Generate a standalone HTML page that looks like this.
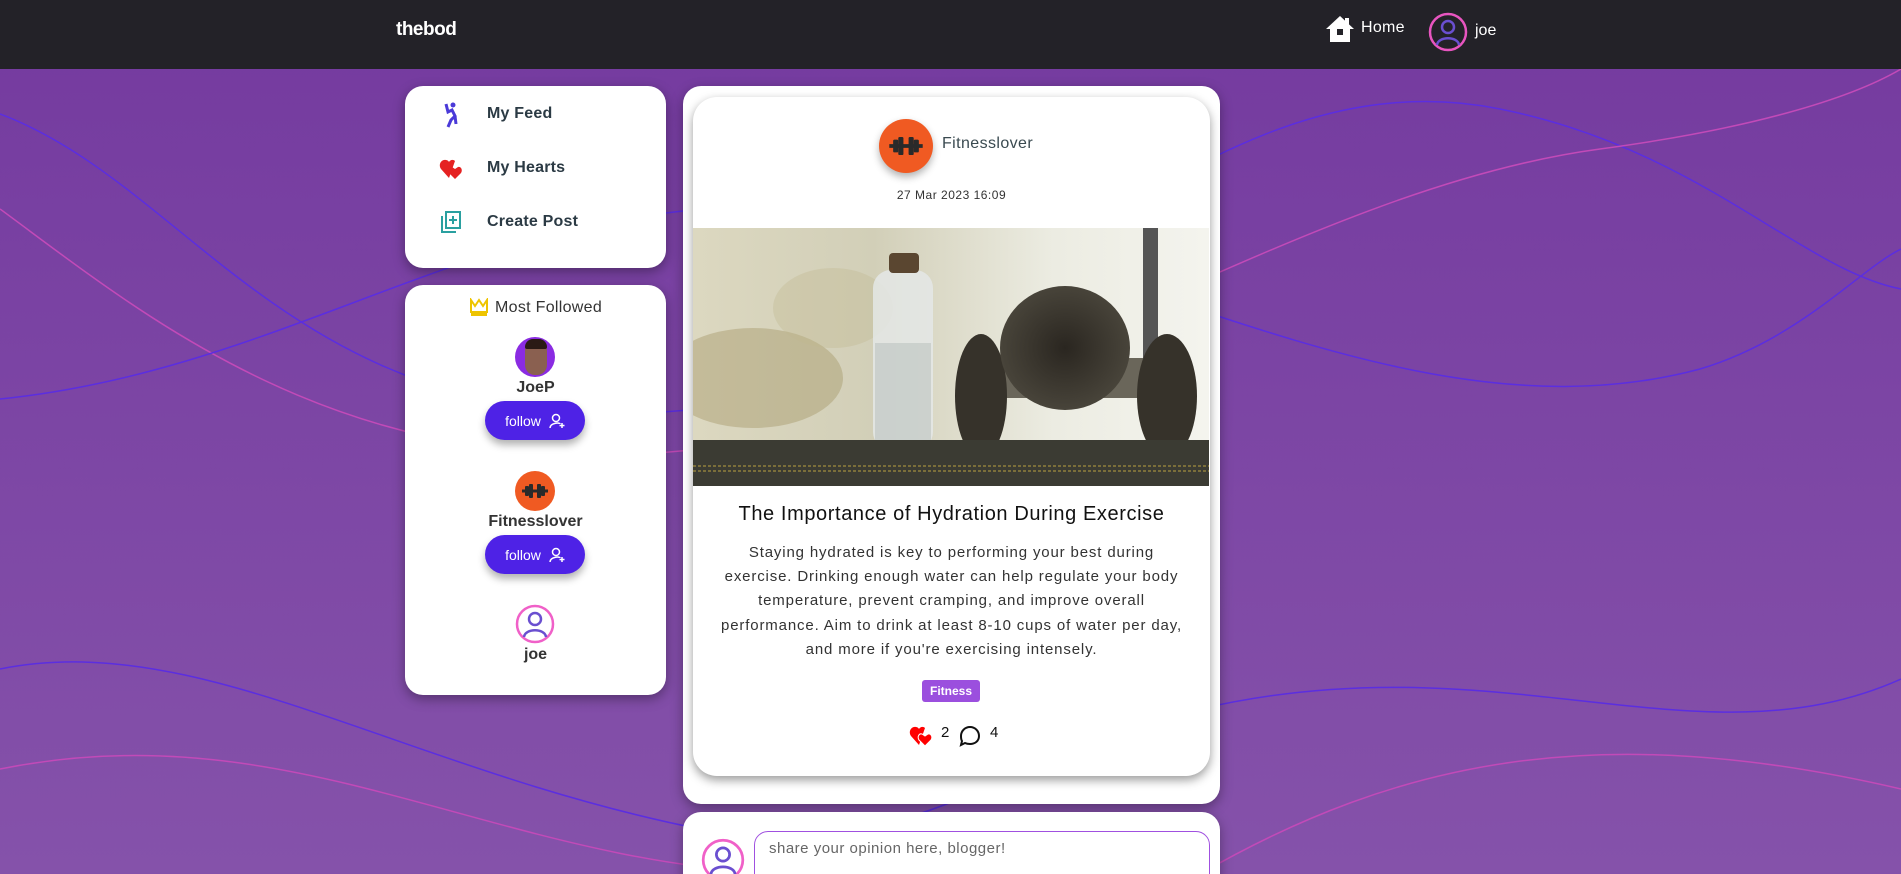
<!DOCTYPE html>
<html style="width:1901px;height:874px;overflow:hidden"><head><meta charset="utf-8"><style>
*{box-sizing:border-box;margin:0;padding:0}
body{width:1901px;height:874px;overflow:hidden;font-family:"Liberation Sans",sans-serif;background:linear-gradient(#743a9f,#8552aa);position:relative}
.nav{position:absolute;left:0;top:0;width:1901px;height:69px;background:#232228}
.abs{position:absolute}
.card{position:absolute;background:#fff;border-radius:18px;box-shadow:0 4px 12px rgba(0,0,0,.35)}
.item{position:absolute;left:0;font-size:16px;font-weight:bold;color:#2b3a44;letter-spacing:0.2px}
.btn{position:absolute;left:80px;width:100px;height:39px;border-radius:20px;background:#4e22e6;color:#fff;font-size:14px;box-shadow:0 5px 8px rgba(0,0,0,.3);display:flex;align-items:center;justify-content:center;gap:8px}
.nm{position:absolute;width:261px;left:0;text-align:center;font-size:16px;font-weight:bold;color:#333}
.av{position:absolute;border-radius:50%}
.ln{display:block;white-space:nowrap}
</style></head><body>
<svg class="abs" style="left:0;top:69px" width="1901" height="805" viewBox="0 0 1901 805" fill="none">
<path d="M0 45 C200 120 300 380 700 340 C1000 300 1200 -20 1500 40 C1700 80 1800 200 1901 220" stroke="#5b2ee0" stroke-width="1.5"/>
<path d="M0 140 C150 250 350 420 700 380 C1000 350 1300 120 1600 80 C1750 60 1850 30 1901 0" stroke="#c24ab8" stroke-width="1.5"/>
<path d="M0 330 C300 300 500 120 800 140 C1100 160 1400 380 1700 300 C1800 270 1860 200 1901 180" stroke="#5b2ee0" stroke-width="1.5"/>
<path d="M0 600 C200 560 400 700 700 760 C900 800 1000 690 1200 640 C1500 570 1700 700 1901 610" stroke="#5b2ee0" stroke-width="1.5"/>
<path d="M0 700 C300 640 500 800 800 805" stroke="#c24ab8" stroke-width="1.5"/>
<path d="M1200 805 C1400 690 1600 650 1901 720" stroke="#c24ab8" stroke-width="1.5"/>
</svg>
<div class="nav">
<div class="abs" style="left:396px;top:19px;color:#fff;font-size:19px;font-weight:bold;letter-spacing:-0.5px">thebod</div>
<svg class="abs" style="left:1325px;top:15px" width="30" height="28" viewBox="0 0 30 28"><path d="M15 1 L29 14 L25 14 L25 27 L5 27 L5 14 L1 14 Z" fill="#fff"/><rect x="20" y="3" width="4" height="7" fill="#fff"/><rect x="12" y="14" width="6" height="6" fill="#232228"/></svg>
<div class="abs" style="left:1361px;top:19px;color:#fff;font-size:16px;letter-spacing:0.3px">Home</div>
<svg class="abs" style="left:1428px;top:12px" width="40" height="40" viewBox="0 0 40 40"><circle cx="20" cy="20" r="18" fill="#232228" stroke="#e855c0" stroke-width="2.5"/><circle cx="20" cy="15" r="6" fill="none" stroke="#6a4fd0" stroke-width="2.5"/><path d="M9 33 C10 24 30 24 31 33" fill="none" stroke="#6a4fd0" stroke-width="2.5"/></svg>
<div class="abs" style="left:1475px;top:22px;color:#fff;font-size:16px">joe</div>
</div>

<div class="card" style="left:405px;top:86px;width:261px;height:182px">
<svg class="abs" style="left:38px;top:16px" width="16" height="26" viewBox="0 0 16 26"><circle cx="10" cy="3" r="2.5" fill="#4a3ad8"/><path d="M3 2 L5 10 L9 8 L12 14 L8 18 L5 25 M12 14 L13 22" stroke="#4a3ad8" stroke-width="3" fill="none"/></svg>
<div class="item" style="left:82px;top:19px">My Feed</div>
<svg class="abs" style="left:34px;top:72px" width="24" height="22" viewBox="0 0 24 22"><path d="M10 20 L2 11 C-1 7 2 1 7 2 C9 2 10 4 10 4 C11 2 14 1 16 3" fill="#e52222"/><path d="M16 21 L10 15 C8 12 10 8 13 9 L16 11 L19 9 C22 8 24 12 22 15 Z" fill="#e52222"/></svg>
<div class="item" style="left:82px;top:73px">My Hearts</div>
<svg class="abs" style="left:35px;top:124px" width="22" height="24" viewBox="0 0 22 24"><rect x="6" y="2" width="14" height="16" fill="none" stroke="#2aa0a0" stroke-width="2"/><path d="M2 6 L2 22 L16 22" fill="none" stroke="#2aa0a0" stroke-width="2"/><path d="M13 6 V14 M9 10 H17" stroke="#2aa0a0" stroke-width="2"/></svg>
<div class="item" style="left:82px;top:127px">Create Post</div>
</div>

<div class="card" style="left:405px;top:285px;width:261px;height:410px">
<svg class="abs" style="left:64px;top:13px" width="20" height="19" viewBox="0 0 20 19"><path d="M2 2 L6 8 L10 2 L14 8 L18 2 L18 14 L2 14 Z" fill="none" stroke="#eec400" stroke-width="2"/><rect x="2" y="15" width="16" height="3" fill="#eec400"/></svg>
<div class="abs" style="left:90px;top:14px;font-size:16px;color:#333;letter-spacing:0.3px">Most Followed</div>
<div class="av" style="left:110px;top:52px;width:40px;height:40px;background:#8a2be2;overflow:hidden"><div style="position:absolute;left:10px;top:4px;width:22px;height:34px;border-radius:10px;background:#8a6050"></div><div style="position:absolute;left:10px;top:2px;width:22px;height:10px;border-radius:8px 8px 2px 2px;background:#2a1a15"></div></div>
<div class="nm" style="top:94px">JoeP</div>
<div class="btn" style="top:116px">follow <svg width="16" height="16" viewBox="0 0 16 16" fill="none" stroke="#fff" stroke-width="1.5"><circle cx="7" cy="5" r="3.5"/><path d="M1 15 C1 10 11 9 11 11 M13 10 V15 M10.5 12.5 H15.5"/></svg></div>
<div class="av" style="left:110px;top:186px;width:40px;height:40px;background:#f05a22"></div>
<svg class="abs" style="left:116px;top:199px" width="28" height="14" viewBox="0 0 28 14"><path d="M1 7 H27" stroke="#2a2a2a" stroke-width="3"/><rect x="4" y="2" width="4" height="10" rx="1" fill="#2a2a2a"/><rect x="8" y="0" width="4" height="14" rx="1" fill="#2a2a2a"/><rect x="16" y="0" width="4" height="14" rx="1" fill="#2a2a2a"/><rect x="20" y="2" width="4" height="10" rx="1" fill="#2a2a2a"/></svg>
<div class="nm" style="top:228px">Fitnesslover</div>
<div class="btn" style="top:250px">follow <svg width="16" height="16" viewBox="0 0 16 16" fill="none" stroke="#fff" stroke-width="1.5"><circle cx="7" cy="5" r="3.5"/><path d="M1 15 C1 10 11 9 11 11 M13 10 V15 M10.5 12.5 H15.5"/></svg></div>
<svg class="abs" style="left:110px;top:319px" width="40" height="40" viewBox="0 0 40 40"><circle cx="20" cy="20" r="18" fill="#fff" stroke="#f060c8" stroke-width="2.5"/><circle cx="20" cy="15" r="6" fill="none" stroke="#6a4fd0" stroke-width="2.5"/><path d="M9 33 C10 24 30 24 31 33" fill="none" stroke="#6a4fd0" stroke-width="2.5"/></svg>
<div class="nm" style="top:361px">joe</div>
</div>

<div class="card" style="left:683px;top:86px;width:537px;height:718px"></div>
<div class="card" style="left:693px;top:97px;width:517px;height:679px;border-radius:24px;box-shadow:0 4px 10px rgba(0,0,0,.4);overflow:hidden">
<div class="av" style="left:186px;top:22px;width:54px;height:54px;background:#f05a22;box-shadow:0 4px 8px rgba(0,0,0,.3)"></div>
<svg class="abs" style="left:194px;top:40px" width="38" height="18" viewBox="0 0 28 14"><path d="M1 7 H27" stroke="#2a2a2a" stroke-width="3"/><rect x="4" y="2" width="4" height="10" rx="1" fill="#2a2a2a"/><rect x="8" y="0" width="4" height="14" rx="1" fill="#2a2a2a"/><rect x="16" y="0" width="4" height="14" rx="1" fill="#2a2a2a"/><rect x="20" y="2" width="4" height="10" rx="1" fill="#2a2a2a"/></svg>
<div class="abs" style="left:249px;top:38px;font-size:16px;color:#3a4a50;letter-spacing:0.4px">Fitnesslover</div>
<div class="abs" style="left:0;width:517px;text-align:center;top:91px;font-size:12px;color:#333;letter-spacing:0.5px">27 Mar 2023 16:09</div>
<svg class="abs" style="left:0;top:131px" width="516" height="258" viewBox="0 0 516 258">
<defs><linearGradient id="bg" x1="0" x2="1"><stop offset="0" stop-color="#dcd8c0"/><stop offset=".35" stop-color="#d2cfb8"/><stop offset=".7" stop-color="#ecece2"/><stop offset="1" stop-color="#f4f4ee"/></linearGradient>
<radialGradient id="d"><stop offset="0" stop-color="#2a2620"/><stop offset="1" stop-color="#48443a"/></radialGradient></defs>
<rect width="516" height="258" fill="url(#bg)"/>
<ellipse cx="60" cy="150" rx="90" ry="50" fill="#a69a6a" opacity=".45"/>
<ellipse cx="140" cy="80" rx="60" ry="40" fill="#c0b690" opacity=".35"/>
<rect x="450" y="0" width="15" height="200" fill="#555"/>
<rect x="180" y="42" width="60" height="180" rx="18" fill="#e4e8e6" opacity=".85"/>
<rect x="182" y="115" width="56" height="105" fill="#bcc3bf" opacity=".6"/>
<rect x="196" y="25" width="30" height="20" rx="4" fill="#5a4630"/>
<rect x="292" y="130" width="160" height="40" fill="#6a665a"/>
<ellipse cx="288" cy="168" rx="26" ry="62" fill="#36322a"/>
<ellipse cx="372" cy="120" rx="65" ry="62" fill="url(#d)"/>
<ellipse cx="474" cy="168" rx="30" ry="62" fill="#36322a"/>
<rect x="0" y="212" width="516" height="46" fill="#3b3b33"/>
<path d="M0 238 H516 M0 243 H516" stroke="#b8a040" stroke-width="1" stroke-dasharray="3 2"/>
</svg>
<div class="abs" style="left:0;width:517px;text-align:center;top:406px;font-size:20px;color:#111;letter-spacing:0.6px">The Importance of Hydration During Exercise</div>
<div class="abs" style="left:0;width:517px;text-align:center;top:444px;font-size:15px;line-height:24.2px;color:#333;letter-spacing:0.85px">
<span class="ln">Staying hydrated is key to performing your best during</span>
<span class="ln">exercise. Drinking enough water can help regulate your body</span>
<span class="ln">temperature, prevent cramping, and improve overall</span>
<span class="ln">performance. Aim to drink at least 8-10 cups of water per day,</span>
<span class="ln">and more if you're exercising intensely.</span></div>
<div class="abs" style="left:229px;top:583px;width:58px;height:22px;border-radius:3px;background:#9b4fde;color:#fff;font-size:12px;font-weight:bold;text-align:center;line-height:22px">Fitness</div>
<svg class="abs" style="left:216px;top:628px" width="24" height="22" viewBox="0 0 24 22"><path d="M10 20 L2 11 C-1 7 2 1 7 2 C9 2 10 4 10 4 C11 2 14 1 16 3" fill="#f00"/><path d="M16 21 L10 15 C8 12 10 8 13 9 L16 11 L19 9 C22 8 24 12 22 15 Z" fill="#f00" stroke="#fff" stroke-width="1"/></svg>
<div class="abs" style="left:248px;top:627px;font-size:15px;color:#111">2</div>
<svg class="abs" style="left:266px;top:628px" width="22" height="22" viewBox="0 0 22 22"><path d="M11 2 C16 2 20 6 20 11 C20 16 16 19 11 19 C9 19 7 18.5 6 18 L2 20 L3 16 C2 14.5 2 13 2 11 C2 6 6 2 11 2 Z" fill="none" stroke="#111" stroke-width="2"/></svg>
<div class="abs" style="left:297px;top:627px;font-size:15px;color:#111">4</div>
</div>

<div class="card" style="left:683px;top:812px;width:537px;height:80px;border-radius:18px 18px 0 0"></div>
<svg class="abs" style="left:701px;top:838px" width="44" height="44" viewBox="0 0 40 40"><circle cx="20" cy="20" r="18" fill="#fff" stroke="#f060c8" stroke-width="2.5"/><circle cx="20" cy="15" r="6" fill="none" stroke="#6a4fd0" stroke-width="2.5"/><path d="M9 33 C10 24 30 24 31 33" fill="none" stroke="#6a4fd0" stroke-width="2.5"/></svg>
<div class="abs" style="left:754px;top:831px;width:456px;height:60px;border:1.5px solid #a050e0;border-radius:14px;padding:8px 14px;font-size:15px;color:#666;letter-spacing:0.5px">share your opinion here, blogger!</div>
</body></html>
